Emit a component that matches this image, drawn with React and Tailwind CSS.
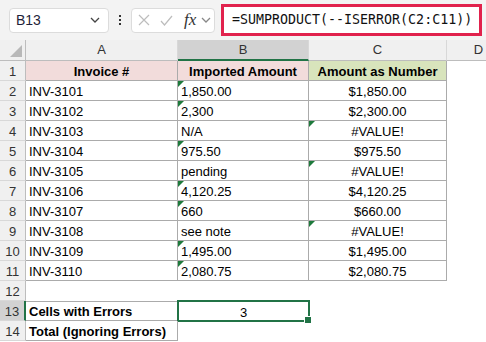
import React from "react";

const GRID = "grid grid-cols-[26px_152px_131px_138px_64px] w-[511px]";

function Chevron({ color = "#444" }) {
  return (
    <svg width="10" height="6" viewBox="0 0 10 6">
      <path d="M1 1 L5 5 L9 1" fill="none" stroke={color} strokeWidth="1.3" />
    </svg>
  );
}

function Tri() {
  return (
    <span className="absolute left-0 top-0 w-0 h-0 border-t-[6px] border-r-[6px] border-t-[#1e7a3c] border-r-transparent" />
  );
}

const rows = [
  ["INV-3101", "1,850.00", "$1,850.00", true, false],
  ["INV-3102", "2,300", "$2,300.00", true, false],
  ["INV-3103", "N/A", "#VALUE!", false, true],
  ["INV-3104", "975.50", "$975.50", true, false],
  ["INV-3105", "pending", "#VALUE!", false, true],
  ["INV-3106", "4,120.25", "$4,120.25", true, false],
  ["INV-3107", "660", "$660.00", true, false],
  ["INV-3108", "see note", "#VALUE!", false, true],
  ["INV-3109", "1,495.00", "$1,495.00", true, false],
  ["INV-3110", "2,080.75", "$2,080.75", true, false],
];

function RowHead({ n, selected }) {
  return (
    <div
      className={
        "h-[20px] flex items-end justify-center leading-[16px] text-[13px] text-[#333] border-b border-b-[#d8d8d8] " +
        (selected
          ? "bg-[#d2d2d2] border-r-2 border-r-[#217346]"
          : "bg-[#f0f0f0] border-r border-r-[#bdbdbd]")
      }
    >
      {n}
    </div>
  );
}

const cellBase = "relative h-[20px] flex items-end leading-[16px] text-[13px] text-black";
const tb = " border-r border-b border-[#ababab]";

export default function App() {
  return (
    <div
      className="w-[486px] h-[342px] overflow-hidden bg-white"
      style={{ fontFamily: '"Liberation Sans", Arial, sans-serif' }}
    >
      {/* Formula bar */}
      <div className="h-[40px] bg-[#f3f3f3] flex items-center">
        <div className="ml-[9px] w-[100px] h-[25px] bg-white border border-[#dcdcdc] rounded-[4px] flex items-center pl-[6px] pr-[8px] justify-between">
          <span className="text-[14px] text-[#1f1f3a]">B13</span>
          <Chevron />
        </div>
        <div className="ml-[9px] w-[3px] flex flex-col gap-[2px] items-center">
          <span className="w-[2px] h-[2px] bg-[#333] block" />
          <span className="w-[2px] h-[2px] bg-[#333] block" />
          <span className="w-[2px] h-[2px] bg-[#333] block" />
        </div>
        <div className="ml-[10px] w-[84px] h-[25px] bg-white border border-[#dcdcdc] rounded-[4px] flex items-center pl-[6px]">
          <svg width="12" height="12" viewBox="0 0 12 12">
            <path d="M1 1 L11 11 M11 1 L1 11" stroke="#bdbdbd" strokeWidth="1.2" fill="none" />
          </svg>
          <svg className="ml-[10px]" width="13" height="11" viewBox="0 0 13 11">
            <path d="M1 6 L4.5 10 L12 1" stroke="#bdbdbd" strokeWidth="1.2" fill="none" />
          </svg>
          <span
            className="ml-[11px] text-[17px] italic text-[#333] leading-none -mt-[2px]"
            style={{ fontFamily: '"Liberation Serif", "Times New Roman", serif' }}
          >
            fx
          </span>
          <span className="ml-[5px]">
            <Chevron color="#888" />
          </span>
        </div>
        <div className="ml-[6px] w-[261px] h-[32px] bg-white border-[3px] border-[#e1224d] flex items-center pl-[8px]">
          <span
            className="text-[13.3px] text-[#111]"
            style={{ fontFamily: '"DejaVu Sans Mono", "Liberation Mono", monospace' }}
          >
            =SUMPRODUCT(--ISERROR(C2:C11))
          </span>
        </div>
      </div>

      {/* Column headers */}
      <div className={GRID}>
        <div className="h-[21px] bg-[#f0f0f0] border-r border-b border-r-[#bdbdbd] border-b-[#bdbdbd] flex items-end justify-end pr-[3px] pb-[3px]">
          <svg width="12" height="12" viewBox="0 0 12 12">
            <path d="M12 0 L12 12 L0 12 Z" fill="#b8b8b8" />
          </svg>
        </div>
        <div className="h-[21px] bg-[#f0f0f0] border-r border-b border-r-[#d8d8d8] border-b-[#bdbdbd] flex items-center justify-center text-[13px] text-[#333]">
          A
        </div>
        <div className="h-[21px] bg-[#d2d2d2] border-r border-r-[#d8d8d8] border-b-2 border-b-[#217346] flex items-center justify-center text-[13px] text-[#333]">
          B
        </div>
        <div className="h-[21px] bg-[#f0f0f0] border-r border-b border-r-[#d8d8d8] border-b-[#bdbdbd] flex items-center justify-center text-[13px] text-[#333]">
          C
        </div>
        <div className="h-[21px] bg-[#f0f0f0] border-r border-b border-r-[#d8d8d8] border-b-[#bdbdbd] flex items-center justify-center text-[13px] text-[#333]">
          D
        </div>

        {/* Row 1 */}
        <RowHead n={1} />
        <div className={cellBase + tb + " bg-[#f2dcdb] justify-center font-bold"}>Invoice #</div>
        <div className={cellBase + tb + " bg-[#f2dcdb] justify-center font-bold"}>Imported Amount</div>
        <div className={cellBase + tb + " bg-[#d8e4bc] justify-center font-bold"}>Amount as Number</div>
        <div className={cellBase} />

        {rows.map((r, i) => (
          <React.Fragment key={i}>
            <RowHead n={i + 2} />
            <div className={cellBase + tb + " pl-[3px]"}>{r[0]}</div>
            <div className={cellBase + tb + " pl-[3px]"}>
              {r[3] && <Tri />}
              {r[1]}
            </div>
            <div className={cellBase + tb + " justify-center"}>
              {r[4] && <Tri />}
              {r[2]}
            </div>
            <div className={cellBase} />
          </React.Fragment>
        ))}

        {/* Row 12 */}
        <RowHead n={12} />
        <div className={cellBase} />
        <div className={cellBase} />
        <div className={cellBase} />
        <div className={cellBase} />

        {/* Row 13 */}
        <RowHead n={13} selected />
        <div className={cellBase + " border-t border-r border-b border-[#ababab] pl-[3px] font-bold"}>Cells with Errors</div>
        <div className={cellBase + " justify-center"}>
          <div className="absolute -top-[1px] -left-[1px] -right-[1px] -bottom-[1px] border-2 border-[#217346]" />
          <div className="absolute -right-[3px] -bottom-[3px] w-[6px] h-[6px] bg-[#217346] border border-white box-content" />
          <span className="relative">3</span>
        </div>
        <div className={cellBase} />
        <div className={cellBase} />

        {/* Row 14 */}
        <RowHead n={14} />
        <div className={cellBase + " border-r border-b border-[#ababab] pl-[3px] font-bold"}>Total (Ignoring Errors)</div>
        <div className={cellBase} />
        <div className={cellBase} />
        <div className={cellBase} />
      </div>
    </div>
  );
}
